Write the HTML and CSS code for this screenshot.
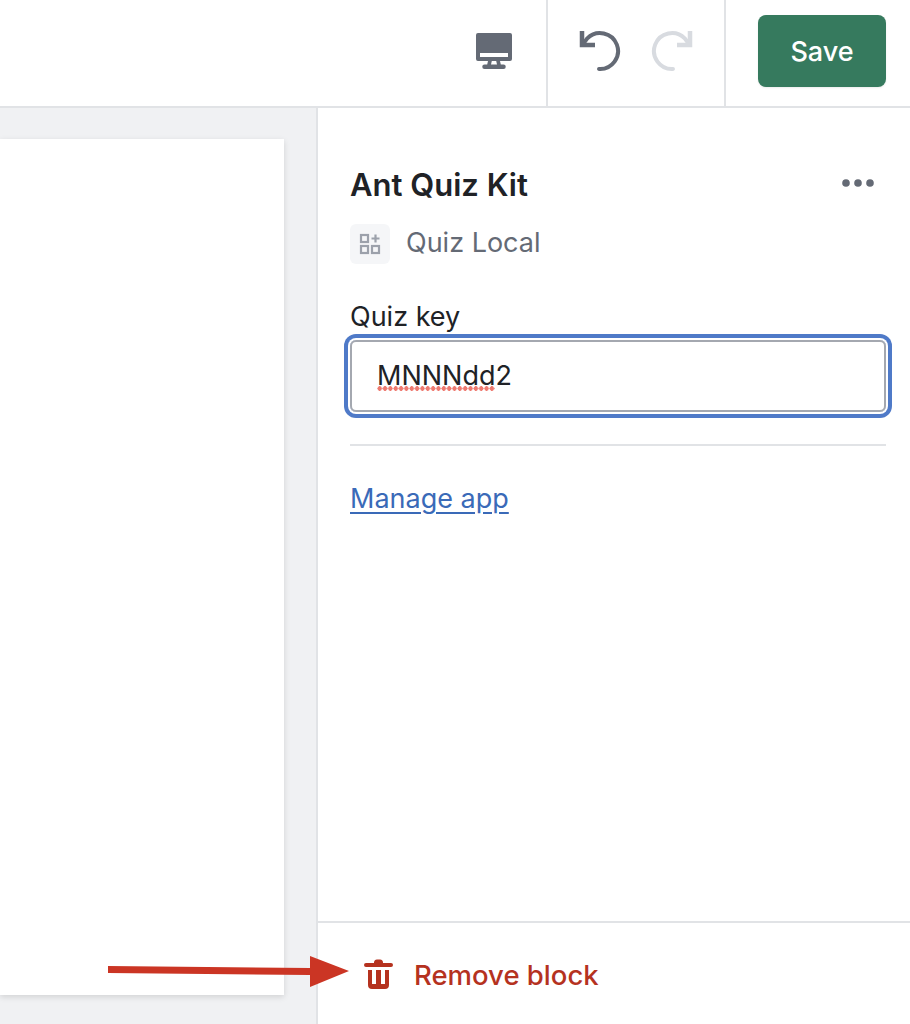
FILE: index.html
```html
<!DOCTYPE html>
<html lang="en">
<head>
<meta charset="utf-8">
<title>Ant Quiz Kit</title>
<link rel="stylesheet" href="styles.css">
</head>
<body>
<header class="topbar">
  <div class="tool tool-view">
    <svg class="ico-desktop" width="38" height="38" viewBox="0 0 38 38"><path fill="#646a75" fill-rule="evenodd" d="M3 1h32a2 2 0 0 1 2 2v24a2 2 0 0 1-2 2H25l.8 3.500h2.700a2.250 2.250 0 0 1 0 4.500h-19a2.250 2.250 0 0 1 0-4.500h2.700L13 29H3a2 2 0 0 1-2-2V3a2 2 0 0 1 2-2zM5 21V25H33V21zM16.800 29l-.8 3.500h6L21.200 29z"/></svg>
  </div>
  <div class="tool tool-history">
    <svg width="44" height="44" viewBox="0 0 44 44" fill="none" stroke="#646a75" stroke-width="4"><path d="M6 16l4.300-5.700A18 18 0 1 1 22 41" stroke-linecap="round"/><path d="M5 3v14h13" stroke-width="4.500"/></svg>
    <svg width="44" height="44" viewBox="0 0 44 44" fill="none" stroke="#d8dbe0" stroke-width="4"><path d="M38 16l-4.300-5.700A18 18 0 1 0 22 41" stroke-linecap="round"/><path d="M39 3v14H26" stroke-width="4.500"/></svg>
  </div>
  <div class="tool-save"><button class="save" type="button">Save</button></div>
</header>
<div class="main">
  <div class="canvas"><div class="sheet"></div></div>
  <aside class="panel">
    <div class="panel-body">
      <div class="title-row">
        <h2 class="title">Ant Quiz Kit</h2>
        <svg width="36" height="10" viewBox="0 0 36 10"><g fill="#646a75"><circle cx="6" cy="5" r="3.800"/><circle cx="18" cy="5" r="3.800"/><circle cx="30" cy="5" r="3.800"/></g></svg>
      </div>
      <div class="source">
        <span class="source-icon"><svg width="22" height="22" viewBox="0 0 22 22" fill="none" stroke="#9ca1ab" stroke-width="2.200"><rect x="2" y="2" width="7" height="7"/><rect x="2" y="13" width="7" height="7"/><rect x="13" y="13" width="7" height="7"/><path d="M16.500 1.500v8M12.500 5.500h8"/></svg></span>
        <span class="source-name">Quiz Local</span>
      </div>
      <div class="field-label">Quiz key</div>
      <div class="input"><span class="misspelt">MNNNdd</span>2</div>
      <hr class="rule">
      <a class="manage" href="#">Manage app</a>
    </div>
    <div class="panel-foot">
      <svg width="32" height="30" viewBox="0 0 32 30"><path fill="#b5321f" d="M12 4a3 3 0 0 1 3-3.500h3A3 3 0 0 1 21 4h8a2 2 0 0 1 0 4H4a2 2 0 0 1 0-4zM6 11h4v14h4V11h5v14h4V11h4v15a4 4 0 0 1-4 4H10a4 4 0 0 1-4-4z"/></svg>
      <span class="remove">Remove block</span>
    </div>
  </aside>
</div>
<svg class="arrow" width="245" height="36" viewBox="0 0 245 36"><path fill="#cb3524" d="M0 13l202 2V3l39 15-39 16V22L0 20z"/></svg>
</body>
</html>
```
FILE: styles.css
```css
* { box-sizing: border-box; }
html, body { margin: 0; height: 100%; }
body {
  width: 910px;
  height: 1024px;
  overflow: hidden;
  position: relative;
  background: #fff;
  font-family: Inter, "Liberation Sans", sans-serif;
  color: #202226;
}
.topbar {
  height: 108px;
  display: flex;
  justify-content: flex-end;
  border-bottom: 2px solid #e1e3e6;
  background: #fff;
}
.tool { display: flex; align-items: center; }
.tool-view { padding: 0 17px 4px 0; width: 74px; justify-content: flex-end; border-right: 2px solid #e1e3e6; }
.ico-desktop { flex: none; margin-right: 16px; }
.tool-history { width: 178px; gap: 30px; padding: 0 0 6px 29px; border-right: 2px solid #e1e3e6; }
.tool-save { width: 184px; padding: 15px 24px 0 32px; }
.save {
  width: 128px;
  height: 72px;
  border: 0;
  border-radius: 8px;
  background: #367a5e;
  color: #fff;
  font: 500 27px Inter, "Liberation Sans", sans-serif;
  box-shadow: 0 1px 2px rgba(0, 0, 0, .08);
}
.main { display: flex; height: 916px; }
.canvas {
  width: 316px;
  flex: none;
  background: #f0f1f3;
  padding-top: 31px;
}
.sheet {
  width: 284px;
  height: 856px;
  background: #fff;
  box-shadow: 0 2px 6px rgba(0, 0, 0, .13);
}
.panel {
  flex: 1;
  min-width: 0;
  display: flex;
  flex-direction: column;
  border-left: 2px solid #e1e3e6;
  background: #fff;
}
.panel-body { flex: 1; min-width: 0; padding: 57px 24px 0 32px; }
.title-row { display: flex; justify-content: space-between; align-items: center; height: 40px; }
.title-row svg { margin-right: 10px; margin-top: -4px; }
.title { margin: 0; font-size: 31px; font-weight: 600; line-height: 40px; }
.source { display: flex; align-items: center; gap: 16px; margin-top: 19px; }
.source-icon {
  width: 40px;
  height: 40px;
  border-radius: 6px;
  background: #f5f6f8;
  display: flex;
  align-items: center;
  justify-content: center;
}
.source-name { font-size: 27px; color: #646a75; margin-bottom: 4px; }
.field-label { margin-top: 35px; font-size: 27px; line-height: 36px; }
.input {
  height: 72px;
  margin-top: 5px;
  padding: 0 25px;
  border: 2px solid #a4a8b0;
  border-radius: 6px;
  box-shadow: 0 0 0 2px #fff, 0 0 0 6px #4f7ac8;
  font-size: 27px;
  line-height: 68px;
}
.misspelt {
  background-image: radial-gradient(circle at center, #ee7a70 2.100px, transparent 2.500px);
  background-size: 5.350px 5px;
  background-repeat: repeat-x;
  background-position: 0 calc(100% - 1px);
}
.rule { margin: 32px 0 0; border: 0; border-top: 2px solid #e1e3e6; }
.manage { display: inline-block; margin-top: 36px; font-size: 27px; color: #3a6ab8; text-underline-offset: 4px; }
.panel-foot {
  height: 103px;
  flex: none;
  border-top: 2px solid #e1e3e6;
  display: flex;
  align-items: center;
  gap: 20px;
  padding: 1px 0 0 44px;
}
.remove { font-size: 27.500px; font-weight: 500; color: #b5321f; margin-top: 2px; }
.arrow { position: absolute; left: 108px; top: 953px; }
```
